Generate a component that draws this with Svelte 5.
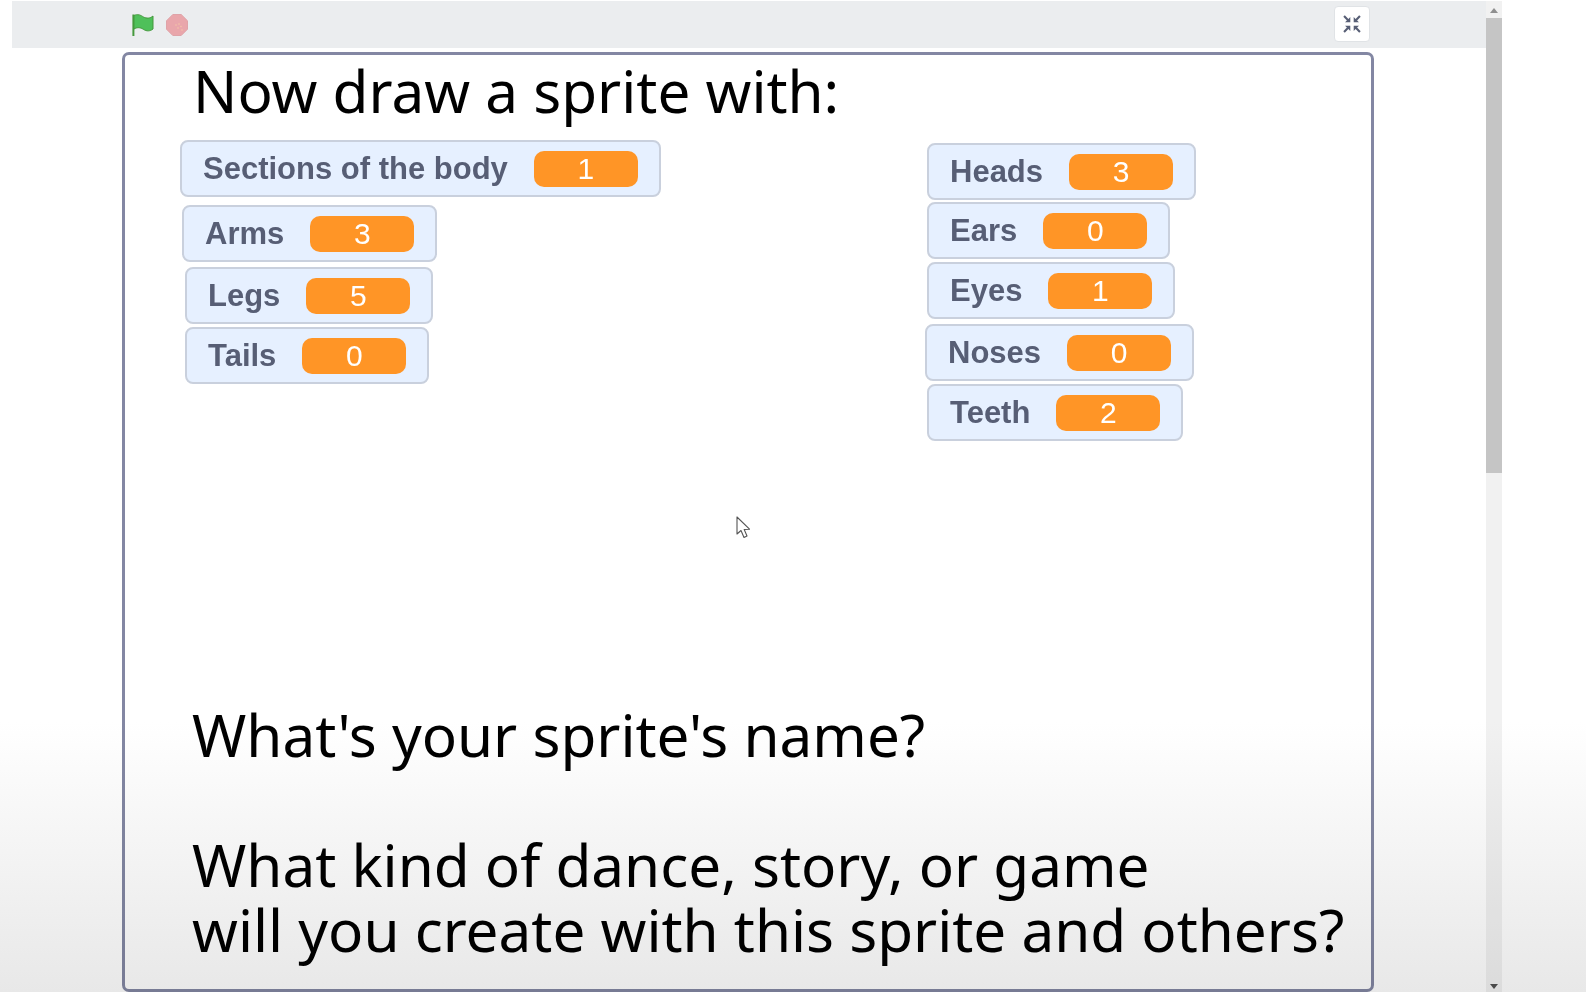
<script>
  const left = [
    { label: 'Sections of the body', value: 1, x: 55, y: 85 },
    { label: 'Arms', value: 3, x: 57, y: 150 },
    { label: 'Legs', value: 5, x: 60, y: 212 },
    { label: 'Tails', value: 0, x: 60, y: 272 }
  ];
  const right = [
    { label: 'Heads', value: 3, x: 802, y: 88 },
    { label: 'Ears', value: 0, x: 802, y: 147 },
    { label: 'Eyes', value: 1, x: 802, y: 207 },
    { label: 'Noses', value: 0, x: 800, y: 269 },
    { label: 'Teeth', value: 2, x: 802, y: 329 }
  ];
  const monitors = [...left, ...right];
</script>

<div class="page">
  <div class="column">
    <div class="toolbar">
      <div class="controls">
        <svg class="flag" viewBox="0 0 22 22" width="22" height="22" aria-label="Go">
          <path d="M1.4 0.5 V22" stroke="#45993d" stroke-width="2" fill="none" />
          <path d="M2 1.5 C5.5 -0.3 8.5 1 11.5 3 C14.5 4.6 18 4.6 21 2 V15 C18 17.4 14.5 17.4 11.5 15.4 C8.5 13.4 5.5 13 2 15 Z" fill="#4fc05a" stroke="#45993d" stroke-width="1" stroke-linejoin="round" />
        </svg>
        <svg class="stop" viewBox="0 0 22 22" width="22" height="22" aria-label="Stop">
          <polygon points="6.8,0.5 15.2,0.5 21.5,6.8 21.5,15.2 15.2,21.5 6.8,21.5 0.5,15.2 0.5,6.8" fill="#e9a6ab" stroke="#dfa3a8" stroke-width="1" />
          <g fill="#f6c9a6">
            <circle cx="10" cy="11" r="0.7" />
            <circle cx="13" cy="10" r="0.7" />
            <circle cx="15" cy="12.5" r="0.7" />
            <circle cx="12" cy="14" r="0.7" />
            <circle cx="16" cy="16" r="0.7" />
          </g>
        </svg>
      </div>
      <button class="shrink" aria-label="Exit full screen">
        <svg viewBox="0 0 20 20" width="20" height="20">
          <g fill="#575e75">
            <path d="M8.3 8.3 H3 L4.9 6.4 L1.3 2.8 L2.8 1.3 L6.4 4.9 L8.3 3 Z" />
            <path d="M11.7 8.3 H17 L15.1 6.4 L18.7 2.8 L17.2 1.3 L13.6 4.9 L11.7 3 Z" />
            <path d="M8.3 11.7 H3 L4.9 13.6 L1.3 17.2 L2.8 18.7 L6.4 15.1 L8.3 17 Z" />
            <path d="M11.7 11.7 H17 L15.1 13.6 L18.7 17.2 L17.2 18.7 L13.6 15.1 L11.7 17 Z" />
          </g>
        </svg>
      </button>
    </div>

    <div class="stage">
      <h1 class="title">Now draw a sprite with:</h1>

      {#each monitors as m}
        <div class="monitor" style="left: {m.x}px; top: {m.y}px">
          <span class="label">{m.label}</span>
          <span class="value">{m.value}</span>
        </div>
      {/each}

      <svg class="cursor" viewBox="0 0 16 24" width="16" height="24" aria-hidden="true">
        <path d="M1 1 V18 L5 14.5 L8 21.5 L11 20 L8.2 13.5 L13.5 13.2 Z" fill="#fff" stroke="#555" stroke-width="1.1" stroke-linejoin="round" />
      </svg>

      <div class="questions">
        <p class="q-name">What's your sprite's name?</p>
        <p class="q-kind">What kind of dance, story, or game</p>
        <p class="q-more">will you create with this sprite and others?</p>
      </div>
    </div>
  </div>

  <div class="scrollbar">
    <span class="arrow up"></span>
    <div class="thumb"></div>
    <span class="arrow down"></span>
  </div>

  <div class="fade"></div>
</div>

<style>
  :global(body) {
    margin: 0;
    background: #fff;
  }

  .page {
    position: relative;
    display: flex;
    align-items: flex-start;
    width: 1586px;
    height: 992px;
    padding: 1px 0 0 12px;
    box-sizing: border-box;
    overflow: hidden;
    background: #fff;
  }

  .column {
    display: flex;
    flex-direction: column;
    width: 1474px;
    height: 991px;
  }

  .toolbar {
    flex: none;
    display: flex;
    align-items: center;
    justify-content: space-between;
    height: 47px;
    padding: 0 116px 0 120px;
    box-sizing: border-box;
    background: #ebedef;
  }

  .controls {
    display: flex;
    align-items: center;
    gap: 12px;
  }

  .flag,
  .stop {
    display: block;
  }

  .shrink {
    display: flex;
    align-items: center;
    justify-content: center;
    width: 36px;
    height: 36px;
    margin-top: -1px;
    padding: 0;
    border: 1px solid #e0e3e6;
    border-radius: 4px;
    background: #fff;
  }

  .stage {
    position: relative;
    flex: 1;
    display: flex;
    flex-direction: column;
    width: 1252px;
    margin: 4px 0 0 110px;
    box-sizing: border-box;
    border: 3px solid #8387a3;
    border-radius: 7px;
    background: #fff;
    font-family: "Noto Sans", "Open Sans", sans-serif;
    color: #000;
  }

  .title {
    margin: 0;
    padding: 3px 0 0 68px;
    font-size: 58.4px;
    font-weight: 400;
    line-height: 66px;
    white-space: nowrap;
  }

  .monitor {
    position: absolute;
    display: flex;
    align-items: center;
    gap: 26px;
    height: 57px;
    padding: 0 21px 0 21px;
    box-sizing: border-box;
    border: 2px solid #c9d0dd;
    border-radius: 8px;
    background: #e6f0ff;
    font-family: "Liberation Sans", Arial, sans-serif;
    font-size: 31px;
    white-space: nowrap;
  }

  .label {
    font-weight: 700;
    color: #575e75;
  }

  .value {
    width: 104px;
    height: 36px;
    border-radius: 10px;
    background: #ff9526;
    color: #fff;
    font-size: 30px;
    line-height: 36px;
    text-align: center;
  }

  .cursor {
    position: absolute;
    left: 611px;
    top: 461px;
  }

  .questions {
    display: flex;
    flex-direction: column;
    margin-top: auto;
    padding: 0 0 27px 67px;
    font-size: 58.4px;
    white-space: nowrap;
  }

  .questions p {
    height: 65px;
    margin: 0;
    line-height: 65px;
    overflow: visible;
  }

  .q-kind {
    margin-top: 65px !important;
  }

  .scrollbar {
    position: relative;
    flex: none;
    width: 16px;
    height: 991px;
    background: #f1f1f1;
  }

  .thumb {
    position: absolute;
    top: 17px;
    left: 0;
    width: 100%;
    height: 455px;
    background: #c5c5c5;
  }

  .arrow {
    position: absolute;
    left: 4px;
    width: 0;
    height: 0;
    border-left: 4.5px solid transparent;
    border-right: 4.5px solid transparent;
  }

  .up {
    top: 7px;
    border-bottom: 5px solid #8f8f8f;
  }

  .down {
    bottom: 3px;
    border-top: 5px solid #505050;
  }

  .fade {
    position: absolute;
    left: 0;
    right: 0;
    bottom: 0;
    height: 270px;
    background: linear-gradient(to bottom, #fff, #e8e8e8);
    mix-blend-mode: multiply;
    pointer-events: none;
  }
</style>
